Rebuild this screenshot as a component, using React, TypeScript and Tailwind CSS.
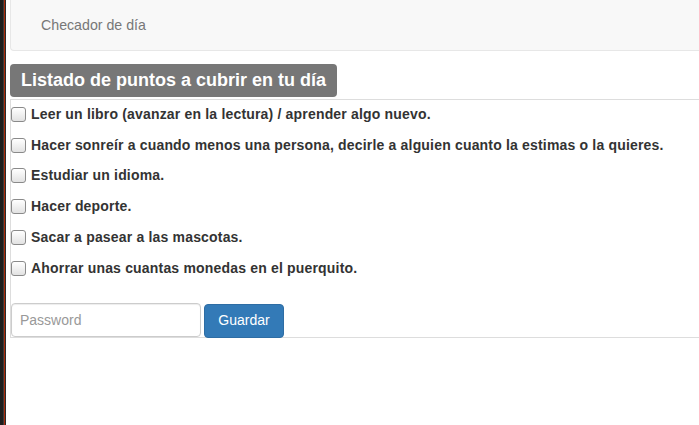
const ITEMS = [
  "Leer un libro (avanzar en la lectura) / aprender algo nuevo.",
  "Hacer sonreír a cuando menos una persona, decirle a alguien cuanto la estimas o la quieres.",
  "Estudiar un idioma.",
  "Hacer deporte.",
  "Sacar a pasear a las mascotas.",
  "Ahorrar unas cuantas monedas en el puerquito.",
];

function Box() {
  return (
    <span className="mr-[5px] inline-block h-[15px] w-[15px] shrink-0 rounded-[3px] border border-[#8a8a8a] bg-gradient-to-b from-white to-[#e2e2e2]" />
  );
}

export default function App() {
  return (
    <div
      className="flex min-h-[425px] bg-white text-[14px] text-[#333]"
      style={{ fontFamily: '"Liberation Sans", Arial, sans-serif' }}
    >
      {/* window edge */}
      <div className="flex shrink-0">
        <div className="w-[3px] bg-[#1e1e1e]" />
        <div className="w-[1px] bg-[#3a3a3a]" />
        <div className="w-[1px] bg-[#a82a0a]" />
        <div className="w-[1px] bg-[#2a2a2a]" />
      </div>

      <div className="min-w-0 flex-1 pl-[4px]">
        <div className="flex h-[51px] items-center rounded-bl-[4px] border-b border-l border-[#e7e7e7] bg-[#f8f8f8] pl-[30px] pt-[1px] text-[14.2px] text-[#777]">
          Checador de día
        </div>

        <div className="mt-[13px]">
          <span className="inline-flex h-[33px] items-center rounded-[4px] bg-[#777] px-[11px] text-[18px] font-bold text-white">
            Listado de puntos a cubrir en tu día
          </span>
        </div>

        <div className="mt-[2px] border-b border-l border-t border-[#ddd]">
          <ul className="-mt-[1px]">
            {ITEMS.map((t) => (
              <li key={t} className="flex h-[30.8px] items-center font-bold tracking-[0.18px]">
                <Box />
                {t}
              </li>
            ))}
          </ul>
          <div className="mt-[19px] flex items-start gap-[3px]">
            <input
              type="password"
              placeholder="Password"
              className="h-[34px] w-[190px] rounded-[4px] border border-[#ccc] px-[8px] text-[14px] shadow-[inset_0_1px_1px_rgba(0,0,0,0.075)] outline-none placeholder:text-[#999]"
            />
            <button className="mt-[1px] -mb-[1px] h-[34px] w-[80px] rounded-[4px] border border-[#2e6da4] bg-[#337ab7] text-[14px] text-white">
              Guardar
            </button>
          </div>
        </div>
      </div>
    </div>
  );
}
